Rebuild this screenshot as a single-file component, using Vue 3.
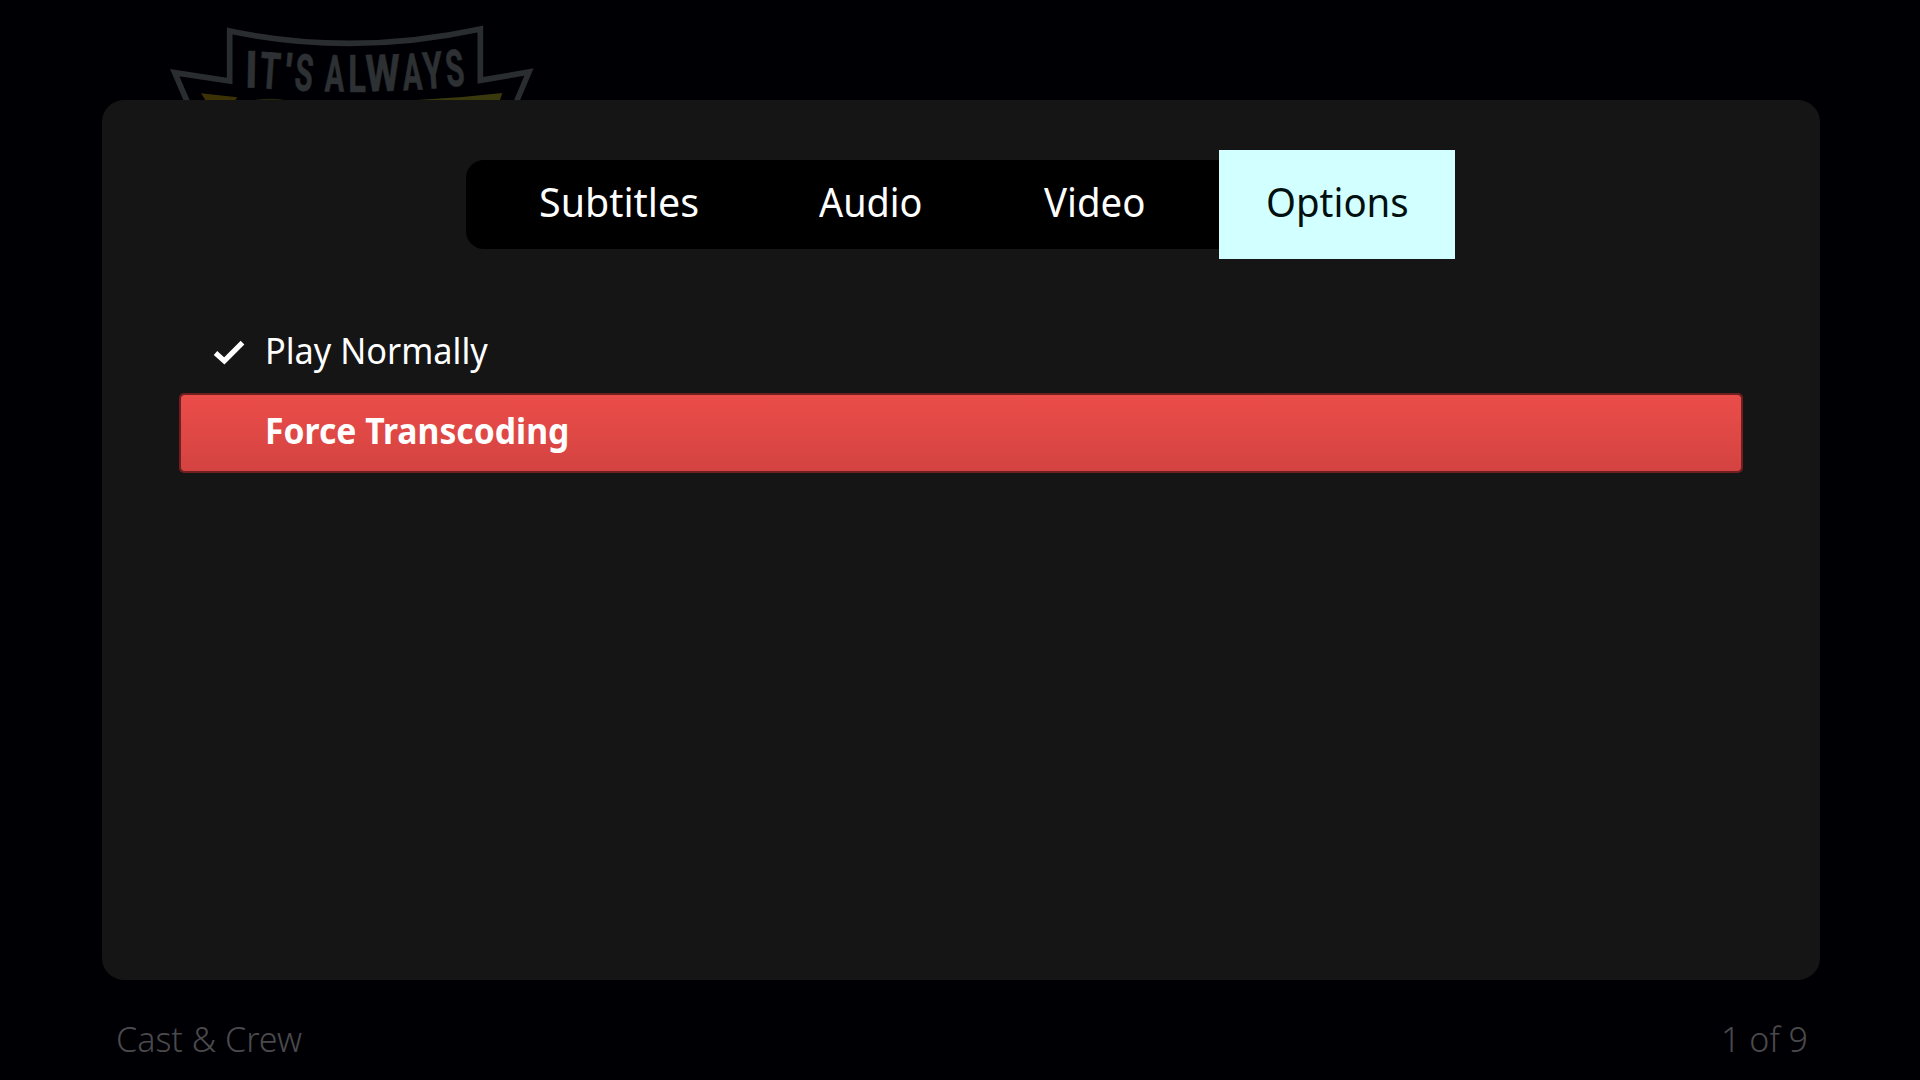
<script setup>
const tabs = [
  { label: 'Subtitles', cls: 'subtitles' },
  { label: 'Audio', cls: 'audio' },
  { label: 'Video', cls: 'video' },
  { label: 'Options', cls: 'options' },
]

// Banner letters: centre, baseline, horizontal squeeze and tilt
const letters = [
  { c: 'I', x: 303, y: 232, s: 0.85, r: 1 },
  { c: 'T', x: 357, y: 236, s: 0.65, r: 4 },
  { c: "'", x: 410, y: 243, s: 0.85, r: 5 },
  { c: 'S', x: 458, y: 242, s: 0.58, r: 5 },
  { c: 'A', x: 553, y: 244, s: 0.57, r: 1 },
  { c: 'L', x: 621, y: 245, s: 0.64, r: 0 },
  { c: 'W', x: 699, y: 243, s: 0.77, r: -1 },
  { c: 'A', x: 789, y: 240, s: 0.57, r: -2 },
  { c: 'Y', x: 852, y: 235, s: 0.62, r: -4 },
  { c: 'S', x: 920, y: 228, s: 0.58, r: -6 },
]
</script>

<template>
  <div class="screen">
    <header class="backdrop">
      <svg class="logo" viewBox="0 0 1200 270" width="400" height="90">
        <path d="M116 285 L74 188 L239 213 L239 63 Q610 140 991 57 L991 211 L1137 186 L1095 285" fill="none" stroke="#2a2d2f" stroke-width="17" />
        <path d="M153 250 L262 262 L256 270 L166 270 Z" fill="#3d3206" />
        <path d="M315 270 Q360 262 405 270 Z" fill="#24270b" />
        <path d="M800 270 Q930 264 1057 249 L1050 270 Z" fill="#3a390d" />
        <g class="letters" fill="#2d3133" stroke="#2d3133" stroke-width="2">
          <text v-for="(l, i) in letters" :key="i" :transform="`translate(${l.x} ${l.y}) rotate(${l.r}) scale(${l.s} 1)`" text-anchor="middle">{{ l.c }}</text>
        </g>
      </svg>
    </header>

    <main class="dialog">
      <nav class="tabs">
        <div v-for="t in tabs" :key="t.label" class="tab" :class="t.cls"><span>{{ t.label }}</span></div>
      </nav>
      <ul class="list">
        <li class="row">
          <svg class="check" viewBox="0 0 32 25" width="34" height="26">
            <path d="M3 13.5 L11.5 21 L29 3.5" fill="none" stroke="#fff" stroke-width="5" />
          </svg>
          <span class="normal">Play Normally</span>
        </li>
        <li class="row focused"><span class="force">Force Transcoding</span></li>
      </ul>
    </main>

    <footer class="footer">
      <span class="cast">Cast &amp; Crew</span>
      <span class="count">1 of 9</span>
    </footer>
  </div>
</template>

<style>
body { margin: 0; background: #000003; }
</style>

<style scoped>
.screen {
  width: 1920px;
  height: 1080px;
  overflow: hidden;
  display: flex;
  flex-direction: column;
  background: #000004;
  font-family: "Noto Sans", "Open Sans", sans-serif;
  color: #fff;
}
.backdrop { height: 100px; flex: none; padding: 10px 0 0 150px; box-sizing: border-box; }
.logo { display: block; overflow: visible; }
.letters { font: 700 153px Roboto, sans-serif; }
.dialog {
  position: relative;
  flex: none;
  width: 1718px;
  height: 880px;
  margin-left: 102px;
  box-sizing: border-box;
  padding-top: 60px;
  background: #151515;
  border-radius: 22px;
}
.tabs {
  display: flex;
  width: 989px;
  height: 89px;
  margin-left: 364px;
  background: #000;
  border-radius: 18px 0 0 18px;
  font-size: 40px;
  line-height: 84px;
}
.tab { box-sizing: border-box; white-space: nowrap; }
.tab span, .row span { display: inline-block; transform-origin: 0 50%; }
.subtitles { width: 303px; padding-left: 73px; }
.subtitles span { transform: scaleX(0.985); }
.audio { width: 226px; padding-left: 50px; }
.audio span { transform: scaleX(0.945); }
.video { width: 224px; padding-left: 49px; }
.video span { transform: scaleX(0.96); }
.options {
  width: 236px;
  height: 109px;
  margin-top: -10px;
  padding-left: 47px;
  line-height: 104px;
  background: #d2ffff;
  color: #001010;
}
.options span { transform: scaleX(0.96); }
.list { list-style: none; margin: 64px 0 0 77px; padding: 0; width: 1564px; }
.row {
  height: 80px;
  display: flex;
  align-items: center;
  box-sizing: border-box;
  font-size: 36px;
  line-height: 72px;
  padding-left: 86px;
  border-radius: 5px;
  white-space: nowrap;
}
.row:first-child { padding-left: 33px; padding-bottom: 5px; }
.check { flex: none; margin-right: 19px; margin-top: 3px; }
.normal { transform: scaleX(0.953); }
.force { transform: scaleX(0.936); }
.focused {
  font-weight: 700;
  padding-left: 84px;
  padding-bottom: 4px;
  border: 2px solid #701e20;
  background: linear-gradient(#eb4d49, #d34341) padding-box;
}
.footer {
  flex: 1;
  display: flex;
  justify-content: space-between;
  padding: 34px 112px 0 116px;
  font-size: 34px;
  line-height: 50px;
  font-weight: 300;
  color: #4a4a4d;
}
</style>
